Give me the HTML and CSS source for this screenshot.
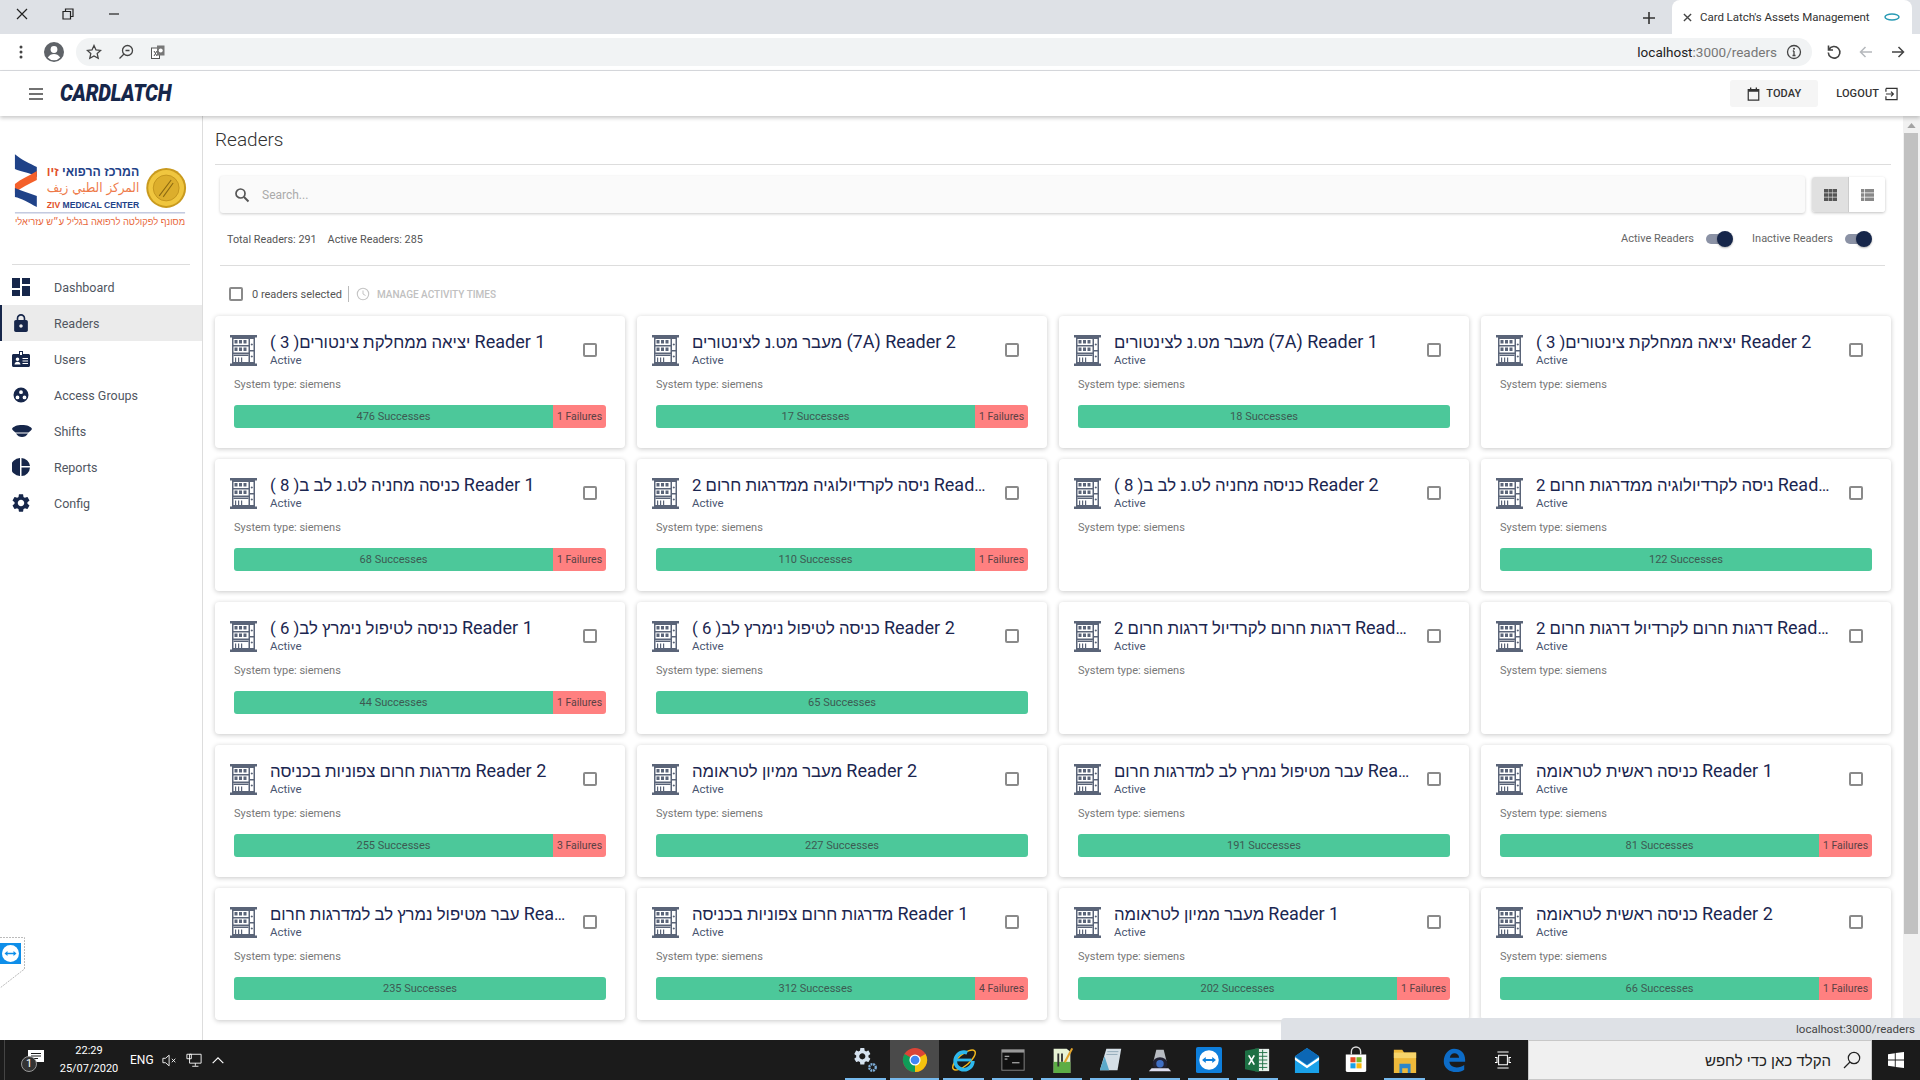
FILE: index.html
```html
<!DOCTYPE html>
<html lang="en">
<head>
<meta charset="utf-8">
<title>Card Latch's Assets Management</title>
<link rel="stylesheet" href="styles.css">
</head>
<body>
<svg class="defs" width="0" height="0">
  <symbol id="bld" viewBox="0 0 27 31">
    <path fill="#5a6478" d="M0 0h27v2.500H0zM0 28.500h27V31H0zM2 2.500h23v26H2z"/>
    <path fill="#fff" d="M3.500 4h15v6h-15zM3.500 11.500h15v6h-15zM3.500 19h15v8h-15zM20 4h3.500v11H20zM20 16.500h3.500V27H20z"/>
    <path fill="#5a6478" d="M4.500 5h3v3.500h-3zM9 5h3v3.500H9zM13.500 5h3v3.500h-3zM4.500 12.500h3V16h-3zM9 12.500h3V16H9zM13.500 12.500h3V16h-3zM3.500 19.500h15V21h-15zM5 22.500h1.200V27H5zM8 22.500h1.200V27H8zM11 22.500h1.200V27H11zM20.800 9h2v1h-2zM21.300 8.500h1v2h-1zM20.800 21h2v1h-2zM21.300 20.500h1v2h-1z"/>
  </symbol>
</svg>

<header class="tabstrip">
  <div class="winbtns">
    <svg class="ic16" viewBox="0 0 16 16"><path d="M3 3l10 10M13 3L3 13" stroke="#222" fill="none" stroke-width="1.200"/></svg>
    <svg class="ic16" viewBox="0 0 16 16"><path d="M3 5.500h7.500V13H3zM5.500 5.500V3H13v7.500h-2.500" stroke="#222" fill="none" stroke-width="1.200"/></svg>
    <svg class="ic16" viewBox="0 0 16 16"><path d="M3 8h10" stroke="#222" fill="none" stroke-width="1.200"/></svg>
  </div>
  <div class="tabspace"></div>
  <svg class="newtab" viewBox="0 0 12 12"><path d="M6 0v12M0 6h12" stroke="#333" stroke-width="1.600" fill="none"/></svg>
  <div class="tab">
    <svg class="tabx" viewBox="0 0 10 10"><path d="M1 1l8 8M9 1L1 9" stroke="#444" stroke-width="1.500" fill="none"/></svg>
    <span class="tabtitle">Card Latch's Assets Management</span>
    <svg class="tabfav" viewBox="0 0 16 8"><ellipse cx="8" cy="4" rx="7" ry="3" fill="none" stroke="#2a9bb5" stroke-width="1.500"/></svg>
  </div>
</header>

<div class="toolbar">
  <svg class="kebab" viewBox="0 0 4 16"><circle cx="2" cy="3" r="1.500" fill="#444"/><circle cx="2" cy="8" r="1.500" fill="#444"/><circle cx="2" cy="13" r="1.500" fill="#444"/></svg>
  <svg class="avatar" viewBox="0 0 20 20"><circle cx="10" cy="10" r="10" fill="#5f6368"/><circle cx="10" cy="7.500" r="3.400" fill="#fff"/><path d="M3.800 15.500c1.500-2.600 3.800-3.600 6.200-3.600s4.700 1 6.200 3.600A8.400 8.400 0 0110 18.300a8.400 8.400 0 01-6.200-2.800z" fill="#fff"/></svg>
  <div class="omnibox">
    <svg class="omni-ic" viewBox="0 0 16 16"><path d="M8 1.500l2 4.400 4.700.5-3.500 3.200 1 4.700L8 11.900l-4.200 2.400 1-4.700L1.300 6.400 6 5.900z" fill="none" stroke="#444" stroke-width="1.300"/></svg>
    <svg class="omni-ic" viewBox="0 0 16 16"><circle cx="9.500" cy="6.500" r="5" fill="none" stroke="#444" stroke-width="1.300"/><path d="M6 10L1.500 14.500M7.500 6.500h4" stroke="#444" stroke-width="1.300" fill="none"/></svg>
    <svg class="omni-ic" viewBox="0 0 16 16"><rect x="1.500" y="4" width="8" height="10.500" fill="#fff" stroke="#555"/><rect x="7" y="1.500" width="7.500" height="10" fill="#777"/><circle cx="10.700" cy="6.500" r="2" fill="#fff"/><path d="M4 7l3 5M7 7l-3 5" stroke="#555"/></svg>
    <span class="omni-space"></span>
    <span class="url"><b>localhost</b>:3000/readers</span>
    <svg class="omni-info" viewBox="0 0 16 16"><circle cx="8" cy="8" r="6.500" fill="none" stroke="#444" stroke-width="1.300"/><path d="M8 7v4.500M6.500 11.500h3M6.800 7h1.200" stroke="#444" stroke-width="1.300"/><circle cx="8" cy="4.700" r="1" fill="#444"/></svg>
  </div>
  <svg class="nav-ic nav-first" viewBox="0 0 16 16"><path d="M2.500 1.500v4.500H7M3 5.500A5.800 5.800 0 112.300 8.500" fill="none" stroke="#444" stroke-width="1.600"/></svg>
  <svg class="nav-ic" viewBox="0 0 16 16"><path d="M14 8H2.500M7.500 3l-5 5 5 5" fill="none" stroke="#b5b8bc" stroke-width="1.500"/></svg>
  <svg class="nav-ic" viewBox="0 0 16 16"><path d="M2 8h11.500M8.500 3l5 5-5 5" fill="none" stroke="#444" stroke-width="1.500"/></svg>
</div>

<div class="appbar">
  <svg class="burger" viewBox="0 0 14 12"><path d="M0 1h14M0 6h14M0 11h14" stroke="#444" stroke-width="1.500" fill="none"/></svg>
  <span class="brand">CARDLATCH</span>
  <span class="appspace"></span>
  <button class="today">
    <svg class="btn-ic" viewBox="0 0 14 16"><path d="M1 3h12v12H1z" fill="none" stroke="#333" stroke-width="1.400"/><path d="M1 2.500h12v3H1zM3 .5h1.500v2H3zM9.500 .5H11v2H9.500z" fill="#333"/></svg>
    TODAY
  </button>
  <button class="logout">LOGOUT
    <svg class="btn-ic" viewBox="0 0 14 14"><path d="M1 1h12v12H1V9.500M1 4.500V1M1 7h8M6.500 4.500L9 7l-2.500 2.500" fill="none" stroke="#333" stroke-width="1.300"/></svg>
  </button>
</div>

<div class="main">
  <aside class="sidebar">
    <svg class="logo" viewBox="0 0 203 110">
      <path d="M15 24C22 30 30 33 37 37V47C29 42 21 42 15 39Z" fill="#1f4288"/>
      <path d="M37 41V50C29 54 21 58 15 63V54C21 49 29 46 37 41Z" fill="#f4602a"/>
      <path d="M15 58C21 61 30 63 37 66V77C29 73 21 68 15 67Z" fill="#1f4288"/>
      <text class="lg-he" x="47" y="46" textLength="93" lengthAdjust="spacingAndGlyphs">המרכז הרפואי <tspan class="lg-red">זיו</tspan></text>
      <text class="lg-ar" x="47" y="62" textLength="93" lengthAdjust="spacingAndGlyphs">المركز الطبي زيف</text>
      <text class="lg-en" x="47" y="78" textLength="93" lengthAdjust="spacingAndGlyphs"><tspan class="lg-red">ZIV</tspan> MEDICAL CENTER</text>
      <circle cx="167" cy="58" r="20" fill="#c99a1e"/>
      <circle cx="167" cy="58" r="18" fill="#f0c63f"/>
      <circle cx="167" cy="58" r="13" fill="#dcae2c" stroke="#b88b17" stroke-width=".7"/>
      <path d="M160 66l12-16M164 67l10-14" stroke="#8c6a12" stroke-width="1.100" fill="none"/>
      <path d="M15 83h171" stroke="#a3aed0"/>
      <text class="lg-tag" x="15" y="95" textLength="171" lengthAdjust="spacingAndGlyphs">מסונף לפקולטה לרפואה בגליל ע״ש עזריאלי</text>
    </svg>
    <hr class="side-hr">
    <nav class="menu">
      <a class="mi"><svg class="mi-ic" viewBox="3 3 18 18"><path d="M3 13h8V3H3v10zm0 8h8v-6H3v6zm10 0h8V11h-8v10zm0-18v6h8V3h-8z"/></svg>Dashboard</a>
      <a class="mi mi-on"><svg class="mi-ic" viewBox="2 1 20 21"><path d="M18 8h-1V6c0-2.760-2.240-5-5-5S7 3.240 7 6v2H6c-1.100 0-2 .9-2 2v10c0 1.100.9 2 2 2h12c1.100 0 2-.9 2-2V10c0-1.100-.9-2-2-2zm-6 9c-1.100 0-2-.9-2-2s.9-2 2-2 2 .9 2 2-.9 2-2 2zm3.100-9H8.900V6c0-1.710 1.390-3.100 3.100-3.100 1.710 0 3.100 1.390 3.100 3.100v2z"/></svg>Readers</a>
      <a class="mi"><svg class="mi-ic" viewBox="0 0 18 16"><path fill-rule="evenodd" d="M7 0h4v3h5.500c.8 0 1.500.7 1.500 1.500v10c0 .8-.7 1.500-1.500 1.500h-15C.7 16 0 15.300 0 14.500v-10C0 3.700.7 3 1.500 3H7zM8 1v3h2V1zM5.500 6.500a1.800 1.800 0 100 3.600 1.800 1.800 0 000-3.600zM2.500 13.500h6c0-1.700-1.300-2.800-3-2.800s-3 1.100-3 2.800zM10.500 7v1H16V7zM10.500 9.500v1H16v-1zM10.500 12v1H16v-1z"/></svg>Users</a>
      <a class="mi"><svg class="mi-ic" viewBox="0 0 18 18"><path fill-rule="evenodd" d="M9 1.500a7.500 7.500 0 100 15 7.500 7.500 0 000-15zM9 4.300a1.900 1.900 0 110 3.800 1.900 1.900 0 010-3.800zM5.500 9.500a1.900 1.900 0 110 3.800 1.900 1.900 0 010-3.800zM12.500 9.500a1.900 1.900 0 110 3.800 1.900 1.900 0 010-3.800z"/></svg>Access Groups</a>
      <a class="mi"><svg class="mi-ic mi-cap" viewBox="0 0 20 12"><path d="M10 0C5 0 1 1.500 0 4c1 1.800 3 3 3.500 3.500h13C17 7 19 5.800 20 4 19 1.500 15 0 10 0zM4 8.500c1.500 2.500 3.500 3.500 6 3.500s4.500-1 6-3.500z"/></svg>Shifts</a>
      <a class="mi"><svg class="mi-ic" viewBox="0 0 18 18"><path d="M8 0v18A9 9 0 018 0zM9.500 0A9 9 0 0118 8H9.500zM9.500 9.500H18A9 9 0 019.500 18z"/></svg>Reports</a>
      <a class="mi"><svg class="mi-ic" viewBox="2 2 20 20"><path d="M19.140 12.940c.04-.3.06-.61.06-.94 0-.32-.02-.64-.07-.94l2.030-1.580c.18-.14.23-.41.12-.61l-1.920-3.320c-.12-.22-.37-.29-.59-.22l-2.390.96c-.5-.38-1.030-.7-1.620-.94l-.36-2.540c-.04-.24-.24-.41-.48-.41h-3.840c-.24 0-.43.17-.47.41l-.36 2.540c-.59.24-1.130.57-1.620.94l-2.390-.96c-.22-.08-.47 0-.59.22L2.740 8.870c-.12.21-.08.47.12.61l2.030 1.580c-.05.3-.09.63-.09.94s.02.64.07.94l-2.030 1.580c-.18.14-.23.41-.12.61l1.920 3.320c.12.22.37.29.59.22l2.390-.96c.5.38 1.030.7 1.620.94l.36 2.540c.05.24.24.41.48.41h3.840c.24 0 .44-.17.47-.41l.36-2.540c.59-.24 1.130-.56 1.620-.94l2.390.96c.22.08.47 0 .59-.22l1.920-3.320c.12-.22.07-.47-.12-.61l-2.010-1.580zM12 15.600c-1.980 0-3.600-1.620-3.600-3.600s1.620-3.600 3.600-3.600 3.600 1.620 3.600 3.600-1.620 3.600-3.600 3.600z"/></svg>Config</a>
    </nav>
  </aside>

  <main class="content">
    <h1 class="title">Readers</h1>
    <div class="searchrow">
      <div class="search">
        <svg class="search-ic" viewBox="0 0 16 16"><circle cx="6.500" cy="6.500" r="4.500" fill="none" stroke="#555" stroke-width="1.700"/><path d="M10 10l4.500 4.500" stroke="#555" stroke-width="1.900"/></svg>
        <span class="search-ph">Search...</span>
      </div>
      <div class="viewtoggle">
        <span class="vt vt-on"><svg class="vt-ic" viewBox="0 0 13 12"><path fill="#555" d="M0 0h4v3.500H0zM4.500 0h4v3.500h-4zM9 0h4v3.500H9zM0 4.200h4v3.500H0zM4.500 4.200h4v3.500h-4zM9 4.200h4v3.500H9zM0 8.400h4V12H0zM4.500 8.400h4V12h-4zM9 8.400h4V12H9z"/></svg></span>
        <span class="vt"><svg class="vt-ic" viewBox="0 0 13 12"><path fill="#888" d="M0 0h3v3.500H0zM3.700 0H13v3.500H3.700zM0 4.200h3v3.500H0zM3.700 4.200H13v3.500H3.700zM0 8.400h3V12H0zM3.700 8.400H13V12H3.700z"/></svg></span>
      </div>
    </div>
    <div class="statsrow">
      <span class="stat">Total Readers: 291</span>
      <span class="stat">Active Readers: 285</span>
      <span class="stats-space"></span>
      <span class="tlabel">Active Readers</span><span class="switch"><i></i></span>
      <span class="tlabel tlabel2">Inactive Readers</span><span class="switch"><i></i></span>
    </div>
    <div class="selectrow">
      <span class="cb"></span>
      <span class="selcount">0 readers selected</span>
      <span class="seldiv"></span>
      <svg class="clock" viewBox="0 0 14 14"><circle cx="7" cy="7" r="5.700" fill="none" stroke="#c4c4c4" stroke-width="1.100"/><path d="M7 3.500V7l2.500 1.500" fill="none" stroke="#c4c4c4"/></svg>
      <span class="manage">MANAGE ACTIVITY TIMES</span>
    </div>

    <section class="grid">
      <article class="card"><div class="head"><svg class="bld"><use href="#bld"/></svg><div class="ht"><div class="name">( 3 )יציאה ממחלקת צינטורים <span class="rd">Reader 1</span></div><div class="state">Active</div></div><span class="cb"></span></div><div class="sys">System type: siemens</div><div class="bar"><span class="ok">476 Successes</span><span class="bad">1 Failures</span></div></article>
      <article class="card"><div class="head"><svg class="bld"><use href="#bld"/></svg><div class="ht"><div class="name">מעבר מט.נ לצינטורים <span class="rd">(7A) Reader 2</span></div><div class="state">Active</div></div><span class="cb"></span></div><div class="sys">System type: siemens</div><div class="bar"><span class="ok">17 Successes</span><span class="bad">1 Failures</span></div></article>
      <article class="card"><div class="head"><svg class="bld"><use href="#bld"/></svg><div class="ht"><div class="name">מעבר מט.נ לצינטורים <span class="rd">(7A) Reader 1</span></div><div class="state">Active</div></div><span class="cb"></span></div><div class="sys">System type: siemens</div><div class="bar"><span class="ok">18 Successes</span></div></article>
      <article class="card"><div class="head"><svg class="bld"><use href="#bld"/></svg><div class="ht"><div class="name">( 3 )יציאה ממחלקת צינטורים <span class="rd">Reader 2</span></div><div class="state">Active</div></div><span class="cb"></span></div><div class="sys">System type: siemens</div></article>

      <article class="card"><div class="head"><svg class="bld"><use href="#bld"/></svg><div class="ht"><div class="name">( 8 )כניסה מחניה לט.נ לב ב <span class="rd">Reader 1</span></div><div class="state">Active</div></div><span class="cb"></span></div><div class="sys">System type: siemens</div><div class="bar"><span class="ok">68 Successes</span><span class="bad">1 Failures</span></div></article>
      <article class="card"><div class="head"><svg class="bld"><use href="#bld"/></svg><div class="ht"><div class="name">ניסה לקרדיולוגיה ממדרגות חרום 2 <span class="rd">Reader 1</span></div><div class="state">Active</div></div><span class="cb"></span></div><div class="sys">System type: siemens</div><div class="bar"><span class="ok">110 Successes</span><span class="bad">1 Failures</span></div></article>
      <article class="card"><div class="head"><svg class="bld"><use href="#bld"/></svg><div class="ht"><div class="name">( 8 )כניסה מחניה לט.נ לב ב <span class="rd">Reader 2</span></div><div class="state">Active</div></div><span class="cb"></span></div><div class="sys">System type: siemens</div></article>
      <article class="card"><div class="head"><svg class="bld"><use href="#bld"/></svg><div class="ht"><div class="name">ניסה לקרדיולוגיה ממדרגות חרום 2 <span class="rd">Reader 2</span></div><div class="state">Active</div></div><span class="cb"></span></div><div class="sys">System type: siemens</div><div class="bar"><span class="ok">122 Successes</span></div></article>

      <article class="card"><div class="head"><svg class="bld"><use href="#bld"/></svg><div class="ht"><div class="name">( 6 )כניסה לטיפול נימרץ לב <span class="rd">Reader 1</span></div><div class="state">Active</div></div><span class="cb"></span></div><div class="sys">System type: siemens</div><div class="bar"><span class="ok">44 Successes</span><span class="bad">1 Failures</span></div></article>
      <article class="card"><div class="head"><svg class="bld"><use href="#bld"/></svg><div class="ht"><div class="name">( 6 )כניסה לטיפול נימרץ לב <span class="rd">Reader 2</span></div><div class="state">Active</div></div><span class="cb"></span></div><div class="sys">System type: siemens</div><div class="bar"><span class="ok">65 Successes</span></div></article>
      <article class="card"><div class="head"><svg class="bld"><use href="#bld"/></svg><div class="ht"><div class="name">דרגות חרום לקרדיול דרגות חרום 2 <span class="rd">Reader 1</span></div><div class="state">Active</div></div><span class="cb"></span></div><div class="sys">System type: siemens</div></article>
      <article class="card"><div class="head"><svg class="bld"><use href="#bld"/></svg><div class="ht"><div class="name">דרגות חרום לקרדיול דרגות חרום 2 <span class="rd">Reader 2</span></div><div class="state">Active</div></div><span class="cb"></span></div><div class="sys">System type: siemens</div></article>

      <article class="card"><div class="head"><svg class="bld"><use href="#bld"/></svg><div class="ht"><div class="name">מדרגות חרום צפוניות בכניסה <span class="rd">Reader 2</span></div><div class="state">Active</div></div><span class="cb"></span></div><div class="sys">System type: siemens</div><div class="bar"><span class="ok">255 Successes</span><span class="bad">3 Failures</span></div></article>
      <article class="card"><div class="head"><svg class="bld"><use href="#bld"/></svg><div class="ht"><div class="name">מעבר ממיון לטראומה <span class="rd">Reader 2</span></div><div class="state">Active</div></div><span class="cb"></span></div><div class="sys">System type: siemens</div><div class="bar"><span class="ok">227 Successes</span></div></article>
      <article class="card"><div class="head"><svg class="bld"><use href="#bld"/></svg><div class="ht"><div class="name">עבר מטיפול נמרץ לב למדרגות חרום <span class="rd">Reader 1</span></div><div class="state">Active</div></div><span class="cb"></span></div><div class="sys">System type: siemens</div><div class="bar"><span class="ok">191 Successes</span></div></article>
      <article class="card"><div class="head"><svg class="bld"><use href="#bld"/></svg><div class="ht"><div class="name">כניסה ראשית לטראומה <span class="rd">Reader 1</span></div><div class="state">Active</div></div><span class="cb"></span></div><div class="sys">System type: siemens</div><div class="bar"><span class="ok">81 Successes</span><span class="bad">1 Failures</span></div></article>

      <article class="card"><div class="head"><svg class="bld"><use href="#bld"/></svg><div class="ht"><div class="name">עבר מטיפול נמרץ לב למדרגות חרום <span class="rd">Reader 2</span></div><div class="state">Active</div></div><span class="cb"></span></div><div class="sys">System type: siemens</div><div class="bar"><span class="ok">235 Successes</span></div></article>
      <article class="card"><div class="head"><svg class="bld"><use href="#bld"/></svg><div class="ht"><div class="name">מדרגות חרום צפוניות בכניסה <span class="rd">Reader 1</span></div><div class="state">Active</div></div><span class="cb"></span></div><div class="sys">System type: siemens</div><div class="bar"><span class="ok">312 Successes</span><span class="bad">4 Failures</span></div></article>
      <article class="card"><div class="head"><svg class="bld"><use href="#bld"/></svg><div class="ht"><div class="name">מעבר ממיון לטראומה <span class="rd">Reader 1</span></div><div class="state">Active</div></div><span class="cb"></span></div><div class="sys">System type: siemens</div><div class="bar"><span class="ok">202 Successes</span><span class="bad">1 Failures</span></div></article>
      <article class="card"><div class="head"><svg class="bld"><use href="#bld"/></svg><div class="ht"><div class="name">כניסה ראשית לטראומה <span class="rd">Reader 2</span></div><div class="state">Active</div></div><span class="cb"></span></div><div class="sys">System type: siemens</div><div class="bar"><span class="ok">66 Successes</span><span class="bad">1 Failures</span></div></article>
    </section>
  </main>

  <div class="scrollbar">
    <svg class="sb-up" viewBox="0 0 10 6"><path d="M5 0l5 6H0z" fill="#a3a3a3"/></svg>
    <div class="sb-thumb"></div>
  </div>

  <div class="tv-widget">
    <svg class="tv-shape" viewBox="0 0 26 52"><path d="M0 .5h24.500V32L0 51" fill="#fff" stroke="#bbb" stroke-dasharray="2 1"/></svg>
    <svg class="tv-ic" viewBox="0 0 21 21"><rect width="21" height="21" fill="#0e8ee9"/><circle cx="10.500" cy="10.500" r="8.500" fill="#fff"/><path d="M4.500 10.500l3-2.500v1.700h6V8l3 2.500-3 2.500v-1.700h-6V13z" fill="#0e8ee9"/></svg>
  </div>
  <div class="statusbar">localhost:3000/readers</div>
</div>

<footer class="taskbar">
  <div class="tb-left">
    <span class="tb-sep"></span>
    <span class="notif">
      <svg class="notif-ic" viewBox="0 0 18 18"><path d="M1 1h16v12H9l-3 3v-3H1z" fill="#fff"/><path d="M4 4.500h10M4 7h10M4 9.500h7" stroke="#1b1b1b"/></svg>
      <span class="notif-n">1</span>
    </span>
    <span class="clocktxt"><span>22:29</span><span>25/07/2020</span></span>
    <span class="lang">ENG</span>
    <svg class="tray" viewBox="0 0 18 16"><path d="M1 5.500h3L8 2v12l-4-3.500H1z" fill="none" stroke="#fff"/><path d="M11 6l4 4M15 6l-4 4" stroke="#fff"/></svg>
    <svg class="tray" viewBox="0 0 18 16"><path d="M4 1h13v10H4zM1 1h5v5H1zM10.500 11v3M7 14.500h7" fill="#1b1b1b" stroke="#fff"/></svg>
    <svg class="tray" viewBox="0 0 18 16"><path d="M3 11l6-6 6 6" fill="none" stroke="#fff" stroke-width="1.300"/></svg>
  </div>
  <div class="tb-apps">
    <span class="app app-u"><svg class="app-ic" viewBox="0 0 28 28"><g transform="translate(-1 -1) scale(.92)" fill="#d5e2ef"><path d="M19.140 12.940c.04-.3.06-.61.06-.94 0-.32-.02-.64-.07-.94l2.030-1.580c.18-.14.23-.41.12-.61l-1.920-3.320c-.12-.22-.37-.29-.59-.22l-2.390.96c-.5-.38-1.030-.7-1.620-.94l-.36-2.540c-.04-.24-.24-.41-.48-.41h-3.840c-.24 0-.43.17-.47.41l-.36 2.540c-.59.24-1.130.57-1.620.94l-2.390-.96c-.22-.08-.47 0-.59.22L2.740 8.870c-.12.21-.08.47.12.61l2.030 1.580c-.05.3-.09.63-.09.94s.02.64.07.94l-2.030 1.580c-.18.14-.23.41-.12.61l1.920 3.320c.12.22.37.29.59.22l2.390-.96c.5.38 1.030.7 1.620.94l.36 2.540c.05.24.24.41.48.41h3.840c.24 0 .44-.17.47-.41l.36-2.540c.59-.24 1.130-.56 1.620-.94l2.390.96c.22.08.47 0 .59-.22l1.920-3.320c.12-.22.07-.47-.12-.61l-2.010-1.580zM12 15.600c-1.980 0-3.600-1.620-3.600-3.600s1.620-3.600 3.600-3.600 3.600 1.620 3.600 3.600-1.620 3.600-3.600 3.600z"/></g><circle cx="21" cy="22" r="3.500" fill="none" stroke="#7fb0dc" stroke-width="2.500" stroke-dasharray="2 .8"/></svg></span>
    <span class="app app-on app-u"><svg class="app-ic" viewBox="0 0 28 28"><circle cx="14" cy="14" r="13" fill="#db4437"/><path d="M14 14L25.300 7.500A13 13 0 0114 27z" fill="#f4c20d"/><path d="M14 14L14 27A13 13 0 012.700 7.500z" fill="#0f9d58"/><circle cx="14" cy="14" r="6" fill="#fff"/><circle cx="14" cy="14" r="4.700" fill="#4285f4"/></svg></span>
    <span class="app app-u"><svg class="app-ic" viewBox="0 0 28 28"><ellipse cx="14" cy="14" rx="15" ry="6" transform="rotate(-40 14 14)" fill="none" stroke="#f2b81c" stroke-width="1.600"/><circle cx="14" cy="15" r="9.500" fill="none" stroke="#2db8ec" stroke-width="4" stroke-dasharray="48 12"/><path d="M6 14h16" stroke="#2db8ec" stroke-width="3"/></svg></span>
    <span class="app app-u"><svg class="app-ic" viewBox="0 0 28 28"><rect x="2" y="3" width="24" height="22" fill="#111" stroke="#888"/><rect x="2" y="3" width="24" height="3" fill="#999"/><path d="M5 10h5M5 13h3M13 17h8" stroke="#ddd"/></svg></span>
    <span class="app app-u"><svg class="app-ic" viewBox="0 0 28 28"><path d="M5 2h14l4 3v23H5z" fill="#e8f3d4"/><rect x="5" y="16" width="18" height="12" fill="#5dad45"/><path d="M10 7v14M14 7v9" stroke="#333" stroke-width="2"/><path d="M24 1l2 1-8 15-2-1z" fill="#e2a32b"/></svg></span>
    <span class="app app-u"><svg class="app-ic" viewBox="0 0 28 28"><path d="M9 2h16l-4 23H2z" fill="#d5dfe6"/><path d="M7 10L2 25h10z" fill="#5ba9c9"/><path d="M10 5h12M9 8h12" stroke="#8fa6b5"/></svg></span>
    <span class="app app-u"><svg class="app-ic" viewBox="0 0 28 28"><path d="M10 3h8l3 12H7z" fill="#b8bcc2"/><ellipse cx="14" cy="18" rx="8" ry="7" fill="#223"/><circle cx="14" cy="18" r="4" fill="#3f6fc4"/><path d="M2 26h24l-3-3H5z" fill="#dde"/></svg></span>
    <span class="app app-u"><svg class="app-ic" viewBox="0 0 28 28"><rect width="28" height="28" rx="2" fill="#0e7fdc"/><circle cx="14" cy="14" r="10.500" fill="#fff"/><path d="M6.500 14l4-3.300v2.100h7v-2.100l4 3.300-4 3.300v-2.100h-7v2.100z" fill="#0e7fdc"/></svg></span>
    <span class="app app-u"><svg class="app-ic" viewBox="0 0 28 28"><path d="M11 2h15v24H11z" fill="#e8f1ec"/><path d="M15 6h9M15 10h9M15 14h9M15 18h9M15 22h9M19 3v22" stroke="#1d7044"/><path d="M0 4l15-3v26L0 24z" fill="#1d7044"/><path d="M4 9l6 10M10 9L4 19" stroke="#fff" stroke-width="1.800"/></svg></span>
    <span class="app"><svg class="app-ic" viewBox="0 0 28 28"><path d="M1 10L14 1l13 9v18H1z" fill="#1aa1e8"/><path d="M1 10l13 9 13-9-13-9z" fill="#0c67b5"/><path d="M1 11l13 9 13-9v3l-13 9-13-9z" fill="#fff"/></svg></span>
    <span class="app"><svg class="app-ic" viewBox="0 0 28 28"><path d="M3 8h22v17a2 2 0 01-2 2H5a2 2 0 01-2-2z" fill="#fff"/><path d="M9 8V5a5 5 0 0110 0v3" fill="none" stroke="#ddd" stroke-width="1.500"/><path d="M8 11h5.500v5.500H8z" fill="#e74a27"/><path d="M14.500 11H20v5.500h-5.500z" fill="#7bb727"/><path d="M8 17.500h5.500V23H8z" fill="#1aa1e8"/><path d="M14.500 17.500H20V23h-5.500z" fill="#fbb90f"/></svg></span>
    <span class="app app-u"><svg class="app-ic" viewBox="0 0 28 28"><path d="M2 3h9l2 3h13v22H2z" fill="#eeb93a"/><path d="M2 6h24v6H2z" fill="#f7d56b"/><path d="M8 18h12v10h-3v-5h-6v5H8z" fill="#2d86c9"/></svg></span>
    <span class="app"><svg class="app-ic" viewBox="0 0 28 28"><path d="M14 2c7 0 12 4.500 12 12v2H9c.5 4 4 6 8 6 3 0 6-.9 8-2.500v5C23 25.900 19.800 27 16.500 27 8.500 27 3 22 3 15.500 3 8 8 2 14 2zM9.500 11.500h10c-.2-3-2.300-4.800-5-4.800s-4.500 1.800-5 4.800z" fill="#0d6cc7"/></svg></span>
    <span class="app"><svg class="app-ic app-tv" viewBox="0 0 20 22"><path d="M3 1h14M3 21h14M4.500 5h11v12h-11zM0 8h2.500v6H0M20 8h-2.500v6H20" fill="none" stroke="#fff" stroke-width="1.300"/></svg></span>
  </div>
  <div class="tb-search">
    <span class="tbs-text" dir="rtl">הקלד כאן כדי לחפש</span>
    <svg class="tbs-ic" viewBox="0 0 18 18"><circle cx="11" cy="7" r="5.700" fill="none" stroke="#222" stroke-width="1.200"/><path d="M7 11l-6 6" stroke="#222" stroke-width="1.200"/></svg>
  </div>
  <div class="tb-win"><svg class="win-ic" viewBox="0 0 16 16"><path d="M0 2.300l6.800-1v6.200H0zM7.700 1.100L16 0v7.500H7.700zM0 8.500h6.800v6.200l-6.800-1zM7.700 8.500H16V16l-8.300-1.100z" fill="#fff"/></svg></div>
</footer>
</body>
</html>
```

FILE: styles.css
```css
* { box-sizing: border-box; }
html, body { margin: 0; height: 100%; }
body {
  display: flex;
  flex-direction: column;
  height: 1080px;
  overflow: hidden;
  font-family: Roboto, "Liberation Sans", "DejaVu Sans", sans-serif;
  color: #444;
  background: #fff;
}
.defs { position: absolute; }

/* browser frame */
.tabstrip { height: 34px; background: #dee1e6; display: flex; align-items: stretch; flex: none; }
.winbtns { display: flex; align-items: center; gap: 30px; padding: 0 0 6px 14px; }
.ic16 { width: 16px; height: 16px; }
.tabspace { flex: 1; }
.newtab { align-self: center; width: 12px; height: 12px; margin: 2px 17px 0 0; flex: none; }
.tab { width: 240px; margin-right: 8px; background: #fff; border-radius: 8px 8px 0 0; display: flex; align-items: center; padding: 0 12px 0 11px; }
.tabx { width: 9px; height: 9px; flex: none; }
.tabtitle { font-size: 11.500px; color: #333; margin-left: 8px; width: 174px; overflow: hidden; white-space: nowrap; flex: none; letter-spacing: -.05px; }
.tabfav { width: 16px; height: 8px; margin-left: 10px; flex: none; }

.toolbar { height: 37px; flex: none; background: #fff; border-bottom: 1px solid #dadce0; display: flex; align-items: center; padding: 0 14px 1px 19px; }
.kebab { width: 4px; height: 16px; flex: none; }
.avatar { width: 20px; height: 20px; margin-left: 21px; flex: none; }
.omnibox { width: 1736px; margin-left: 12px; height: 28px; background: #f1f3f4; border-radius: 14px; display: flex; align-items: center; padding: 0 10px 0 10px; flex: none; }
.omni-ic { width: 16px; height: 16px; margin-right: 16px; flex: none; }
.omni-space { flex: 1; }
.url { font-size: 13.500px; color: #777; white-space: nowrap; }
.url b { font-weight: 400; color: #222; }
.omni-info { width: 16px; height: 16px; margin-left: 9px; }
.nav-ic { width: 16px; height: 16px; margin-left: 16px; flex: none; }
.nav-first { margin-left: 14px; }

.appbar { height: 45px; flex: none; background: #fff; display: flex; align-items: center; padding: 0 22px 0 29px; box-shadow: 0 2px 4px rgba(0,0,0,.22); position: relative; z-index: 2; }
.burger { width: 14px; height: 12px; flex: none; }
.brand { font-weight: 900; font-style: italic; font-size: 23px; color: #16264a; margin-left: 17px; transform: scaleX(.88); transform-origin: left center; letter-spacing: -.3px; }
.appspace { flex: 1; }
.today, .logout { border: 0; font: 500 11px Roboto, sans-serif; color: #333; display: flex; align-items: center; letter-spacing: .1px; }
.today { width: 88px; height: 27px; background: #f5f5f5; border-radius: 3px; padding: 0 0 0 17px; gap: 6px; }
.logout { background: none; padding: 0; margin-left: 18px; gap: 6px; }
.btn-ic { width: 13px; height: 14px; flex: none; }

/* main */
.main { flex: 1; min-height: 0; display: flex; position: relative; }
.sidebar { width: 203px; flex: none; border-right: 1px solid #ddd; padding-top: 14px; }
.logo { display: block; width: 202px; height: 110px; }
.lg-he { font: 700 13px "Liberation Sans", sans-serif; fill: #1f4288; }
.lg-ar { font: 400 13px "DejaVu Sans", sans-serif; fill: #ee7a4a; }
.lg-en { font: 700 10px "Liberation Sans", sans-serif; fill: #1f4288; }
.lg-red { fill: #e2502a; }
.lg-tag { font: 400 10px "Liberation Sans", sans-serif; fill: #e8663a; }
.side-hr { border: 0; border-top: 1px solid #ddd; margin: 24px 12px 4px; }
.menu { display: flex; flex-direction: column; }
.mi { height: 36px; display: flex; align-items: center; font-size: 12.500px; color: #50565f; padding-left: 12px; }
.mi-on { background: #ebebeb; box-shadow: inset 2px 0 0 #16264a; }
.mi-ic { width: 18px; height: 18px; fill: #16264a; margin-right: 24px; flex: none; }
.mi-cap { width: 20px; height: 12px; margin-right: 22px; }

.content { flex: 1; min-width: 0; padding: 0 12px 0 12px; overflow: hidden; }
.title { margin: 0; height: 49px; border-bottom: 1px solid #ddd; font-size: 19px; font-weight: 300; line-height: 48px; color: #333; }
.searchrow { display: flex; margin: 11px 6px 0 5px; gap: 7px; height: 37px; }
.search { flex: 1; background: #fafafa; border-radius: 3px; box-shadow: 0 1px 3px rgba(0,0,0,.2); display: flex; align-items: center; padding-left: 14px; }
.search-ic { width: 16px; height: 16px; }
.search-ph { font-size: 12px; color: #aaa; margin-left: 12px; }
.viewtoggle { width: 73px; height: 35px; margin-top: 1px; display: flex; border-radius: 3px; box-shadow: 0 1px 3px rgba(0,0,0,.25); overflow: hidden; }
.vt { flex: 1; display: flex; align-items: center; justify-content: center; background: #fff; }
.vt-on { background: #e0e0e0; border-right: 1px solid #ccc; }
.vt-ic { width: 13px; height: 12px; }

.statsrow { display: flex; align-items: center; height: 53px; margin: 0 6px 0 5px; border-bottom: 1px solid #ddd; padding: 0 16px 0 7px; font-size: 10.800px; color: #555; }
.stat { margin-right: 11px; }
.stats-space { flex: 1; }
.tlabel { font-size: 11px; color: #666; margin-bottom: 2px; }
.tlabel2 { margin-left: 22px; }
.switch { width: 24px; height: 10px; margin-left: 12px; border-radius: 5px; background: #8b92a5; position: relative; flex: none; }
.switch i { position: absolute; right: -3px; top: -3px; width: 16px; height: 16px; border-radius: 50%; background: #16264a; box-shadow: 0 1px 2px rgba(0,0,0,.3); }

.selectrow { display: flex; align-items: center; height: 50px; padding-left: 14px; padding-top: 6px; }
.cb { width: 14px; height: 14px; border: 2px solid #8a8a8a; border-radius: 2px; flex: none; background: #fff; }
.selcount { font-size: 11px; color: #555; margin-left: 9px; }
.seldiv { width: 1px; height: 16px; background: #bbb; margin: 0 7px 0 6px; }
.clock { width: 14px; height: 14px; flex: none; }
.manage { font-size: 10px; font-weight: 500; color: #c0c0c0; margin-left: 7px; }

.grid { display: grid; grid-template-columns: repeat(4, 410px); column-gap: 12px; grid-auto-rows: 132px; row-gap: 11px; }
.card { background: #fff; border-radius: 4px; box-shadow: 0 1px 5px rgba(0,0,0,.22); padding: 16px 19px 0; }
.head { display: flex; margin-left: -4px; height: 36px; }
.bld { width: 27px; height: 31px; margin-top: 3px; flex: none; }
.ht { width: 300px; margin: -1px 0 0 13px; flex: none; }
.name { font-size: 16.750px; line-height: 22px; color: #1b2650; white-space: nowrap; overflow: hidden; text-overflow: ellipsis; font-weight: 400; }
.rd { font-size: 18px; }
.state { font-size: 11.500px; line-height: 14px; color: #4a5570; }
.head .cb { margin: 11px 0 0 13px; }
.sys { font-size: 11px; line-height: 14px; color: #777; margin: 10px 0 0 0; }
.bar { display: flex; height: 23px; margin-top: 13px; border-radius: 3px; overflow: hidden; font-size: 11px; line-height: 23px; text-align: center; color: #3c5a52; }
.ok { flex: 1; background: #4cc89a; }
.bad { width: 53px; background: #ff8080; color: #5a4044; flex: none; font-size: 10.500px; }

.scrollbar { width: 17px; flex: none; background: #f1f1f1; display: flex; flex-direction: column; align-items: center; padding-right: 1px; }
.sb-up { width: 9px; height: 5px; margin: 7px 0 5px; flex: none; }
.sb-thumb { width: 14px; height: 801px; background: #c1c1c1; }

.tv-widget { position: absolute; left: 0; top: 821px; width: 26px; height: 52px; }
.tv-shape { position: absolute; inset: 0; width: 26px; height: 52px; }
.tv-ic { position: absolute; left: 0; top: 6px; width: 21px; height: 21px; }
.statusbar { position: absolute; right: 0; bottom: 0; width: 639px; height: 22px; background: #dee1e6; border-radius: 4px 0 0 0; font-size: 11.500px; line-height: 22px; color: #444; text-align: right; padding-right: 5px; z-index: 3; }

/* taskbar */
.taskbar { height: 40px; flex: none; background: #1b1b1b; display: flex; color: #fff; }
.tb-left { width: 841px; display: flex; align-items: center; flex: none; }
.tb-sep { width: 1px; height: 40px; background: #444; margin-left: 4px; }
.notif { position: relative; width: 20px; height: 24px; margin-left: 18px; }
.notif-ic { position: absolute; left: 4px; top: 1px; width: 18px; height: 18px; }
.notif-n { position: absolute; left: -2px; top: 8px; width: 16px; height: 16px; border-radius: 50%; background: #333; border: 1px solid #999; font-size: 11px; line-height: 14px; text-align: center; }
.clocktxt { display: flex; flex-direction: column; align-items: center; font-size: 11px; line-height: 18px; margin-left: 15px; width: 62px; }
.lang { font-size: 12px; margin-left: 10px; }
.tray { width: 16px; height: 15px; margin-left: 8px; }
.tb-apps { display: flex; flex: none; }
.app { width: 49px; height: 40px; display: flex; align-items: center; justify-content: center; position: relative; }
.app-on { background: #4a4a4a; }
.app-u::after { content: ""; position: absolute; left: 4px; right: 4px; bottom: 0; height: 2px; background: #76b9ed; }
.app-on.app-u::after { left: 0; right: 0; }
.app-ic { width: 26px; height: 28px; }
.app-tv { width: 16px; height: 18px; }
.tb-search { width: 344px; margin-left: auto; background: #f0f0f0; border: 1px solid #c8c8c8; display: flex; align-items: center; justify-content: flex-end; padding-right: 10px; color: #222; }
.tbs-text { font: 15px "Liberation Sans", sans-serif; margin-right: 12px; }
.tbs-ic { width: 18px; height: 18px; }
.tb-win { width: 48px; display: flex; align-items: center; justify-content: center; flex: none; }
.win-ic { width: 16px; height: 16px; }
```
